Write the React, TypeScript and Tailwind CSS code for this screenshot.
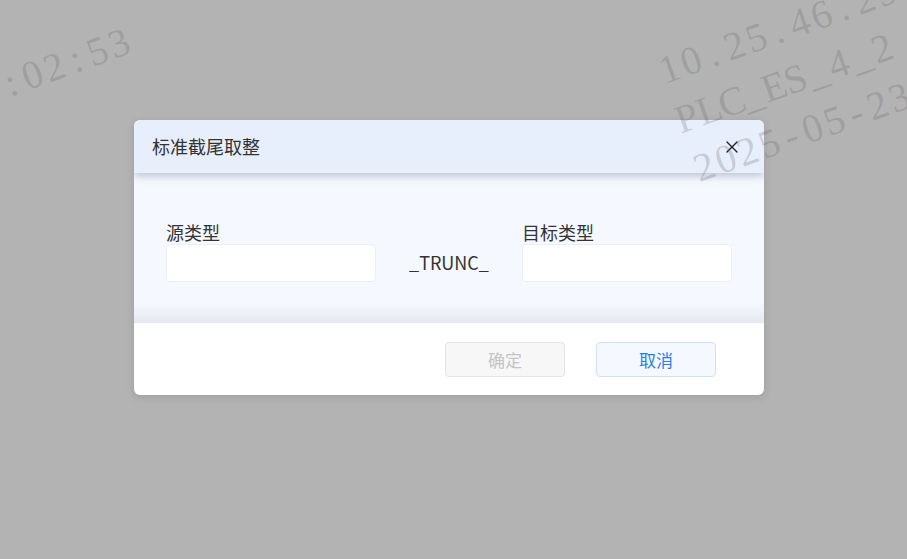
import { X } from 'lucide-react';

const font = "font-['Noto_Sans_CJK_SC','Noto_Sans',sans-serif]";

function Field({ label }: { label: string }) {
  return (
    <div className="flex w-[210px] flex-col">
      <div className="text-[18px] leading-[24px] text-[#333]">{label}</div>
      <input className="h-[38px] w-full rounded-[4px] border border-[#eceef2] bg-white px-2 text-[15px] outline-none" />
    </div>
  );
}

// serif glyphs on a fixed grid, like a typewriter face
function MonoLine({ text }: { text: string }) {
  return (
    <div className="flex h-[52px] items-center">
      {text.split('').map((c, i) => (
        <span key={i} className="inline-block w-[23px] text-center">{c}</span>
      ))}
    </div>
  );
}

function Watermark() {
  return (
    <div className="pointer-events-none absolute inset-0 z-20 overflow-hidden font-['Liberation_Serif',serif] text-[40px] leading-[52px] text-[rgba(100,100,100,0.26)]">
      <div className="absolute left-[-52px] top-[78px] origin-top-left -rotate-[20deg] whitespace-nowrap">
        <MonoLine text="10:02:53" />
      </div>
      <div className="absolute left-[650px] top-[48px] origin-top-left -rotate-[19.5deg] whitespace-nowrap">
        <MonoLine text="10.25.46.29" />
        <MonoLine text="PLC_ES_4_2" />
        <MonoLine text="2025-05-23" />
      </div>
    </div>
  );
}

export default function App() {
  return (
    <div className={`relative h-[559px] w-[907px] overflow-hidden bg-[#b3b3b3] ${font}`}>
      <div className="pl-[134px] pt-[120px]">
        <div className="w-[630px] overflow-hidden rounded-[6px] bg-white shadow-[0_2px_8px_rgba(0,0,0,0.12)]">
          <div className="relative z-10 flex h-[53px] items-center justify-between bg-[#e8effc] pl-[18px] pr-[22px] shadow-[0_3px_8px_rgba(120,130,150,0.45)]">
            <span className="text-[18px] text-[#333]">标准截尾取整</span>
            <X size={20} strokeWidth={1.6} className="text-[#222]" />
          </div>
          <div className="flex h-[150px] items-start bg-[linear-gradient(to_bottom,#f5f9ff_0%,#f5f9ff_86%,#e5e8ef_100%)] px-[32px] pt-[47px]">
            <Field label="源类型" />
            <div className="flex h-[62px] flex-1 items-end justify-center pb-[6px] text-[18px] text-[#333]">_TRUNC_</div>
            <Field label="目标类型" />
          </div>
          <div className="flex h-[72px] items-start justify-end gap-[31px] pr-[48px] pt-[19px]">
            <button className="h-[35px] w-[120px] rounded-[4px] border border-[#e3e3e3] bg-[#f7f7f7] text-[17px] text-[#c4c4c4]">确定</button>
            <button className="h-[35px] w-[120px] rounded-[4px] border border-[#cfe0fa] bg-[#f5f9ff] text-[17px] text-[#2a7cea]">取消</button>
          </div>
        </div>
      </div>
      <Watermark />
    </div>
  );
}
